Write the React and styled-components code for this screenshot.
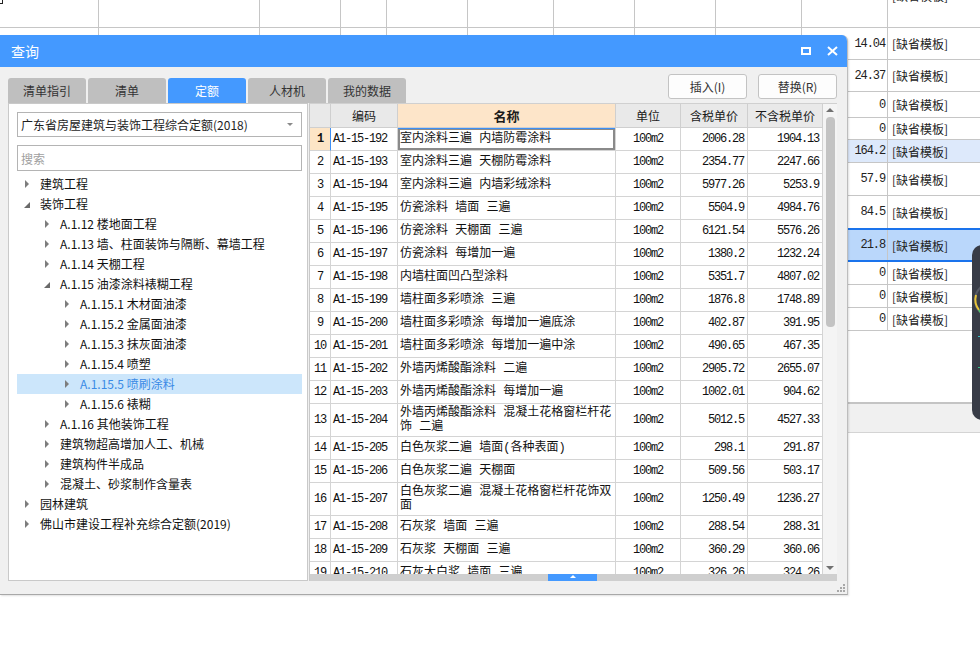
import React from "react";
import styled, { createGlobalStyle } from "styled-components";

const CJK = `"Noto Sans CJK SC", "Noto Sans", sans-serif`;
const MONO = `"Liberation Mono", "Noto Sans CJK SC", monospace`;
const BLUE = "#4499ff";

const GlobalStyle = createGlobalStyle`
  html, body { margin: 0; padding: 0; background: #fff; }
  body { font-family: ${CJK}; font-size: 12px; color: #222; }
  * { box-sizing: border-box; }
`;

const sheetRows = [
  { h: 32, v: "14.04" },
  { h: 32, v: "24.37" },
  { h: 26, v: "0" },
  { h: 22, v: "0" },
  { h: 23, v: "164.2", hi: true },
  { h: 33, v: "57.9" },
  { h: 33, v: "84.5" },
  { h: 34, v: "21.8", sel: true },
  { h: 23, v: "0" },
  { h: 23, v: "0" },
  { h: 23, v: "0" },
];

const tabs = ["清单指引", "清单", "定额", "人材机", "我的数据"];

const tree = [
  { l: 0, t: "建筑工程" },
  { l: 0, t: "装饰工程", open: true },
  { l: 1, t: "A.1.12 楼地面工程" },
  { l: 1, t: "A.1.13 墙、柱面装饰与隔断、幕墙工程" },
  { l: 1, t: "A.1.14 天棚工程" },
  { l: 1, t: "A.1.15 油漆涂料裱糊工程", open: true },
  { l: 2, t: "A.1.15.1 木材面油漆" },
  { l: 2, t: "A.1.15.2 金属面油漆" },
  { l: 2, t: "A.1.15.3 抹灰面油漆" },
  { l: 2, t: "A.1.15.4 喷塑" },
  { l: 2, t: "A.1.15.5 喷刷涂料", sel: true },
  { l: 2, t: "A.1.15.6 裱糊" },
  { l: 1, t: "A.1.16 其他装饰工程" },
  { l: 1, t: "建筑物超高增加人工、机械" },
  { l: 1, t: "建筑构件半成品" },
  { l: 1, t: "混凝土、砂浆制作含量表" },
  { l: 0, t: "园林建筑" },
  { l: 0, t: "佛山市建设工程补充综合定额(2019)" },
];

const items = [
  ["A1-15-192", "室内涂料三遍 内墙防霉涂料", "2006.28", "1904.13"],
  ["A1-15-193", "室内涂料三遍 天棚防霉涂料", "2354.77", "2247.66"],
  ["A1-15-194", "室内涂料三遍 内墙彩绒涂料", "5977.26", "5253.9"],
  ["A1-15-195", "仿瓷涂料 墙面 三遍", "5504.9", "4984.76"],
  ["A1-15-196", "仿瓷涂料 天棚面 三遍", "6121.54", "5576.26"],
  ["A1-15-197", "仿瓷涂料 每增加一遍", "1380.2", "1232.24"],
  ["A1-15-198", "内墙柱面凹凸型涂料", "5351.7", "4807.02"],
  ["A1-15-199", "墙柱面多彩喷涂 三遍", "1876.8", "1748.89"],
  ["A1-15-200", "墙柱面多彩喷涂 每增加一遍底涂", "402.87", "391.95"],
  ["A1-15-201", "墙柱面多彩喷涂 每增加一遍中涂", "490.65", "467.35"],
  ["A1-15-202", "外墙丙烯酸酯涂料 二遍", "2905.72", "2655.07"],
  ["A1-15-203", "外墙丙烯酸酯涂料 每增加一遍", "1002.01", "904.62"],
  ["A1-15-204", "外墙丙烯酸酯涂料 混凝土花格窗栏杆花\n饰 二遍", "5012.5", "4527.33"],
  ["A1-15-205", "白色灰浆二遍 墙面(各种表面)", "298.1", "291.87"],
  ["A1-15-206", "白色灰浆二遍 天棚面", "509.56", "503.17"],
  ["A1-15-207", "白色灰浆二遍 混凝土花格窗栏杆花饰双\n面", "1250.49", "1236.27"],
  ["A1-15-208", "石灰浆 墙面 三遍", "288.54", "288.31"],
  ["A1-15-209", "石灰浆 天棚面 三遍", "360.29", "360.06"],
  ["A1-15-210", "石灰大白浆 墙面 三遍", "326.26", "324.26"],
];

/* ---------- page + background sheet ---------- */

const Page = styled.div`
  position: relative;
  width: 980px;
  height: 669px;
  overflow: hidden;
  background: #fff;
`;

const Sheet = styled.div`
  display: flex;
  flex-direction: column;
`;

const SheetRow = styled.div`
  display: grid;
  grid-template-columns: 99px 161px 81px 46px 81px 86px 81px 81px 86px 86px 1fr;
  height: ${(p) => p.$h}px;
  background: ${(p) => (p.$sel ? "#bad7fb" : p.$hi ? "#dde9fb" : "#fff")};
  border-bottom: ${(p) => (p.$sel ? "2px solid #1a73ec" : "1px solid #c6c6c6")};
  border-top: ${(p) => (p.$sel ? "2px solid #1a73ec" : "none")};
  margin-top: ${(p) => (p.$sel ? "-1px" : "0")};
`;

const SheetCell = styled.div`
  display: flex;
  align-items: ${(p) => (p.$clip ? "flex-start" : "center")};
  justify-content: ${(p) => (p.$right ? "flex-end" : "flex-start")};
  padding: 0 ${(p) => (p.$right ? "2px" : "4px")};
  border-right: ${(p) => (p.$last ? "none" : "1px solid #c6c6c6")};
  overflow: hidden;
  white-space: nowrap;
`;

const SheetNum = styled.span`
  font-family: ${MONO};
  font-size: 12px;
  letter-spacing: -1.1px;
  color: #222;
`;

const SheetText = styled.span`
  font-family: ${CJK};
  font-size: 12px;
  color: #222;
  margin-top: ${(p) => (p.$clip ? "-13px" : "0")};
`;

const CornerMark = styled.span`
  width: 7px;
  height: 7px;
  margin: -3px 0 0 -8px;
  border: 1px solid #222;
`;

const SheetGap = styled.div`
  height: 71px;
`;

const StatusBand = styled.div`
  height: 31px;
  background: #f0f0f0;
  border-top: 2px solid #c4c4c4;
  border-bottom: 1px solid #d4d4d4;
`;

const Floater = styled.div`
  position: absolute;
  left: 972px;
  top: 245px;
  width: 20px;
  height: 175px;
  background: #383c47;
  border-radius: 10px 0 0 10px;
  overflow: hidden;
`;

/* ---------- dialog ---------- */

const Dialog = styled.section`
  position: absolute;
  left: 0;
  top: 35px;
  width: 848px;
  height: 560px;
  display: flex;
  flex-direction: column;
  background: #f0f0f0;
  border-right: 1px solid #bdbdbd;
  border-bottom: 1px solid #a8a8a8;
  border-top-right-radius: 6px;
  box-shadow: 1px 1px 2px rgba(0, 0, 0, 0.12);
  overflow: hidden;
`;

const TitleBar = styled.header`
  height: 32px;
  flex: none;
  display: flex;
  align-items: center;
  padding: 0 9px 0 11px;
  background: ${BLUE};
  color: #fff;
  font-size: 14px;
`;

const Title = styled.span`
  flex: 1;
`;

const WinButtons = styled.div`
  display: flex;
  align-items: center;
  gap: 16px;
`;

const Toolbar = styled.div`
  height: 36px;
  flex: none;
  display: flex;
  align-items: flex-end;
  padding: 0 10px 0 8px;
`;

const TabStrip = styled.div`
  display: flex;
  gap: 2px;
`;

const Tab = styled.div`
  width: 78px;
  height: 25px;
  display: flex;
  align-items: center;
  justify-content: center;
  border-radius: 3px 3px 0 0;
  background: ${(p) => (p.$active ? BLUE : "#bfbfbf")};
  color: ${(p) => (p.$active ? "#fff" : "#333")};
  font-size: 12px;
`;

const Actions = styled.div`
  margin-left: auto;
  align-self: flex-start;
  margin-top: 7px;
  display: flex;
  gap: 11px;
`;

const Button = styled.button`
  width: 79px;
  height: 25px;
  padding: 0;
  border: 1px solid #c3c3c3;
  border-radius: 3px;
  background: #fdfdfd;
  color: #333;
  font-family: ${CJK};
  font-size: 12px;
`;

const Main = styled.div`
  height: 478px;
  flex: none;
  display: flex;
  gap: 1px;
  padding-left: 8px;
`;

/* ---------- left tree panel ---------- */

const LeftPanel = styled.div`
  width: 300px;
  display: flex;
  flex-direction: column;
  padding: 8px 5px 0 8px;
  background: #fff;
  border: 1px solid #c9c9c9;
`;

const Select = styled.div`
  height: 25px;
  display: flex;
  align-items: center;
  justify-content: space-between;
  padding: 0 8px 0 3px;
  border: 1px solid #b4b4b4;
  font-size: 12px;
  color: #1e1e1e;
`;

const Caret = styled.span`
  width: 0;
  height: 0;
  border-left: 3px solid transparent;
  border-right: 3px solid transparent;
  border-top: 3px solid #8a8a8a;
`;

const Search = styled.input`
  height: 26px;
  margin-top: 8px;
  padding: 0 3px;
  border: 1px solid #b4b4b4;
  outline: none;
  font-family: ${CJK};
  font-size: 12px;
  &::placeholder {
    color: #a0a0a0;
  }
`;

const Tree = styled.div`
  margin-top: 3px;
  display: flex;
  flex-direction: column;
`;

const TreeRow = styled.div`
  height: 20px;
  display: flex;
  align-items: center;
  padding-left: ${(p) => p.$level * 20}px;
  background: ${(p) => (p.$sel ? "#cce6fb" : "transparent")};
  color: ${(p) => (p.$sel ? "#3a8ae6" : "#111")};
  font-size: 12px;
  line-height: 20px;
  white-space: nowrap;
`;

const Twisty = styled.span`
  width: 23px;
  flex: none;
  display: flex;
  align-items: center;
`;

const Closed = styled.span`
  margin-left: 8px;
  width: 0;
  height: 0;
  border-top: 4px solid transparent;
  border-bottom: 4px solid transparent;
  border-left: 4px solid #7d7d7d;
`;

const Opened = styled.span`
  margin: 2px 0 0 7px;
  width: 0;
  height: 0;
  border-left: 6px solid transparent;
  border-bottom: 6px solid #6a6a6a;
`;

/* ---------- result table ---------- */

const COLS = "21px 67px 218px 65px 67px 75px";

const TableArea = styled.div`
  width: 528px;
  display: flex;
  flex-direction: column;
  border-left: 1px solid #c9c9c9;
  border-top: 1px solid #d0d0d0;
  background: #fff;
`;

const TableTop = styled.div`
  flex: 1;
  display: flex;
  min-height: 0;
`;

const GridArea = styled.div`
  width: 513px;
  display: flex;
  flex-direction: column;
  min-height: 0;
`;

const HeadRow = styled.div`
  display: grid;
  grid-template-columns: ${COLS};
  height: 24px;
  flex: none;
`;

const HeadCell = styled.div`
  display: flex;
  align-items: center;
  justify-content: center;
  background: ${(p) => (p.$accent ? "#fde5c9" : "#e9e9e9")};
  border-right: 1px solid #cfcfcf;
  border-bottom: 1px solid #cfcfcf;
  font-size: ${(p) => (p.$accent ? "13px" : "12px")};
  font-weight: ${(p) => (p.$accent ? 700 : 400)};
  color: #1a1a1a;
`;

const Body = styled.div`
  flex: 1;
  overflow: hidden;
`;

const Row = styled.div`
  display: grid;
  grid-template-columns: ${COLS};
  height: ${(p) => p.$h}px;
`;

const Cell = styled.div`
  display: flex;
  align-items: center;
  justify-content: ${(p) =>
    p.$align === "right" ? "flex-end" : p.$align === "center" ? "center" : "flex-start"};
  padding: 0 ${(p) => (p.$align === "right" ? "3px" : "2px")};
  border-right: 1px solid #d4d4d4;
  border-bottom: 1px solid #d4d4d4;
  font-family: ${MONO};
  font-size: 12px;
  letter-spacing: -1.2px;
  color: #111;
  white-space: pre;
  overflow: hidden;
`;

const NumCell = styled(Cell)`
  background: ${(p) => (p.$sel ? "#fde5c6" : "#fff")};
  font-weight: ${(p) => (p.$sel ? 700 : 400)};
  border-right-color: ${(p) => (p.$sel ? "#3d8ff5" : "#d4d4d4")};
`;

const NameCell = styled(Cell)`
  font-size: 12px;
  letter-spacing: 0;
  line-height: 14px;
  box-shadow: ${(p) =>
    p.$sel ? "inset 0 1px 0 #3d8ff5, inset 0 0 0 2px #8a8a8a" : "none"};
`;

const VScroll = styled.div`
  width: 14px;
  display: flex;
  flex-direction: column;
  align-items: center;
  background: #f4f4f4;
`;

const ArrowUp = styled.span`
  margin-top: 4px;
  width: 0;
  height: 0;
  border-left: 4px solid transparent;
  border-right: 4px solid transparent;
  border-bottom: 4px solid #707070;
`;

const ArrowDown = styled.span`
  margin: auto 0 4px;
  width: 0;
  height: 0;
  border-left: 4px solid transparent;
  border-right: 4px solid transparent;
  border-top: 4px solid #707070;
`;

const Thumb = styled.div`
  margin-top: 5px;
  width: 9px;
  height: 210px;
  border-radius: 4px;
  background: #c3c3c3;
`;

const HScroll = styled.div`
  height: 7px;
  flex: none;
  display: flex;
  padding-left: 238px;
  background: #cfcfcf;
`;

const HThumb = styled.div`
  width: 49px;
  height: 100%;
  display: flex;
  justify-content: center;
  padding-top: 1px;
  background: ${BLUE};
  &::after {
    content: "";
    width: 0;
    height: 0;
    border-left: 3px solid transparent;
    border-right: 3px solid transparent;
    border-bottom: 3px solid #fff;
  }
`;

const Footer = styled.div`
  flex: 1;
  display: flex;
  justify-content: flex-end;
  align-items: center;
  padding-right: 2px;
`;

function Grip() {
  const dots = [
    [6, 0], [6, 3], [3, 3], [6, 6], [3, 6], [0, 6],
  ];
  return (
    <svg width="8" height="8" viewBox="0 0 8 8">
      {dots.map(([x, y]) => (
        <rect key={`${x}-${y}`} x={x} y={y} width="2" height="2" fill="#a8a8a8" />
      ))}
    </svg>
  );
}

function App() {
  return (
    <Page>
      <GlobalStyle />
      <Sheet>
        <SheetRow $h={28}>
          {Array.from({ length: 11 }).map((_, i) => (
            <SheetCell key={i} $last={i === 10} $clip>
              {i === 0 && <CornerMark />}
              {i === 10 && <SheetText $clip>[缺省模板]</SheetText>}
            </SheetCell>
          ))}
        </SheetRow>
        {sheetRows.map((r, idx) => (
          <SheetRow key={idx} $h={r.h} $hi={r.hi} $sel={r.sel}>
            {Array.from({ length: 9 }).map((_, i) => (
              <SheetCell key={i} />
            ))}
            <SheetCell $right>
              <SheetNum>{r.v}</SheetNum>
            </SheetCell>
            <SheetCell $last>
              <SheetText>[缺省模板]</SheetText>
            </SheetCell>
          </SheetRow>
        ))}
        <SheetGap />
        <StatusBand />
      </Sheet>

      <Floater>
        <svg width="20" height="175" viewBox="0 0 20 175">
          <circle cx="20" cy="55" r="17" fill="none" stroke="#555a66" strokeWidth="2" />
          <path d="M4 50 A17 17 0 0 0 7 65" fill="none" stroke="#e8c53a" strokeWidth="2" />
          <path d="M7 65 A17 17 0 0 0 13 71" fill="none" stroke="#4cc06a" strokeWidth="2" />
          <rect x="6" y="91" width="3" height="1" fill="#38c0c8" />
          <rect x="6" y="122" width="3" height="1" fill="#38c08a" />
        </svg>
      </Floater>

      <Dialog>
        <TitleBar>
          <Title>查询</Title>
          <WinButtons>
            <svg width="10" height="8" viewBox="0 0 10 8">
              <rect x="1" y="1" width="8" height="6" fill="none" stroke="#fff" strokeWidth="2" />
            </svg>
            <svg width="11" height="10" viewBox="0 0 11 10">
              <path d="M1 1 L10 9 M10 1 L1 9" stroke="#fff" strokeWidth="2" />
            </svg>
          </WinButtons>
        </TitleBar>

        <Toolbar>
          <TabStrip>
            {tabs.map((t) => (
              <Tab key={t} $active={t === "定额"}>
                {t}
              </Tab>
            ))}
          </TabStrip>
          <Actions>
            <Button>插入(I)</Button>
            <Button>替换(R)</Button>
          </Actions>
        </Toolbar>

        <Main>
          <LeftPanel>
            <Select>
              <span>广东省房屋建筑与装饰工程综合定额(2018)</span>
              <Caret />
            </Select>
            <Search placeholder="搜索" />
            <Tree>
              {tree.map((n) => (
                <TreeRow key={n.t} $level={n.l} $sel={n.sel}>
                  <Twisty>{n.open ? <Opened /> : <Closed />}</Twisty>
                  {n.t}
                </TreeRow>
              ))}
            </Tree>
          </LeftPanel>

          <TableArea>
            <TableTop>
              <GridArea>
                <HeadRow>
                  <HeadCell />
                  <HeadCell>编码</HeadCell>
                  <HeadCell $accent>名称</HeadCell>
                  <HeadCell>单位</HeadCell>
                  <HeadCell>含税单价</HeadCell>
                  <HeadCell>不含税单价</HeadCell>
                </HeadRow>
                <Body>
                  {items.map(([code, name, tax, notax], i) => {
                    const sel = i === 0;
                    const tall = name.includes("\n");
                    return (
                      <Row key={code} $h={tall ? 33 : 23}>
                        <NumCell $align="center" $sel={sel}>
                          {i + 1}
                        </NumCell>
                        <Cell>{code}</Cell>
                        <NameCell $sel={sel}>{name}</NameCell>
                        <Cell $align="center">100m2</Cell>
                        <Cell $align="right">{tax}</Cell>
                        <Cell $align="right">{notax}</Cell>
                      </Row>
                    );
                  })}
                </Body>
              </GridArea>
              <VScroll>
                <ArrowUp />
                <Thumb />
                <ArrowDown />
              </VScroll>
            </TableTop>
            <HScroll>
              <HThumb />
            </HScroll>
          </TableArea>
        </Main>

        <Footer>
          <Grip />
        </Footer>
      </Dialog>
    </Page>
  );
}

export default App;
